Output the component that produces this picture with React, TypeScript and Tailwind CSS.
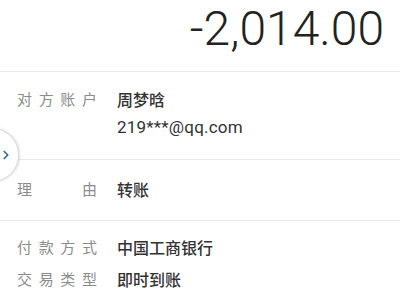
import { ChevronRight } from 'lucide-react';

const font = { fontFamily: 'Roboto, "Noto Sans CJK SC", sans-serif' };

function Label({ text }: { text: string }) {
  const chars = text.split('');
  return (
    <div className="w-[80px] shrink-0 flex justify-between text-[15px] text-[#8c8c8c]">
      {chars.map((c, i) => (
        <span key={i}>{c}</span>
      ))}
    </div>
  );
}

function Row({ label, children }: { label: string; children: React.ReactNode }) {
  return (
    <div className="flex items-start gap-[20px] px-[17px] leading-[27px]">
      <Label text={label} />
      <div className="text-[16px] text-[#333] font-medium">{children}</div>
    </div>
  );
}

export default function App() {
  return (
    <div className="relative w-[400px] h-[300px] overflow-hidden bg-white" style={font}>
      {/* Amount */}
      <div className="h-[72px] border-b border-[#e8e8e8] flex justify-end items-start pr-[16px]">
        <span className="text-[48px] leading-none mt-[5px] text-[#222] font-light">-2,014.00</span>
      </div>

      {/* Counterparty */}
      <div className="pt-[15px] pb-[18px] border-b border-[#e8e8e8]">
        <Row label="对方账户">
          <div>周梦晗</div>
          <div className="font-normal text-[17px] tracking-[0.2px]">219***@qq.com</div>
        </Row>
      </div>

      {/* Reason */}
      <div className="h-[61px] flex flex-col justify-center border-b border-[#e8e8e8]">
        <Row label="理由">转账</Row>
      </div>

      {/* Payment */}
      <div className="pt-[14px] flex flex-col gap-[5px]">
        <Row label="付款方式">中国工商银行</Row>
        <Row label="交易类型">即时到账</Row>
      </div>

      {/* Side tab */}
      <div className="absolute left-[-34px] top-[128px] w-[53px] h-[54px] rounded-full bg-white border border-[#d8d8d8] shadow-[1px_0_3px_rgba(0,0,0,0.12)] flex items-center justify-end pr-[5px]">
        <ChevronRight className="w-[14px] h-[18px] text-[#2f6f7f]" strokeWidth={3} />
      </div>
    </div>
  );
}
